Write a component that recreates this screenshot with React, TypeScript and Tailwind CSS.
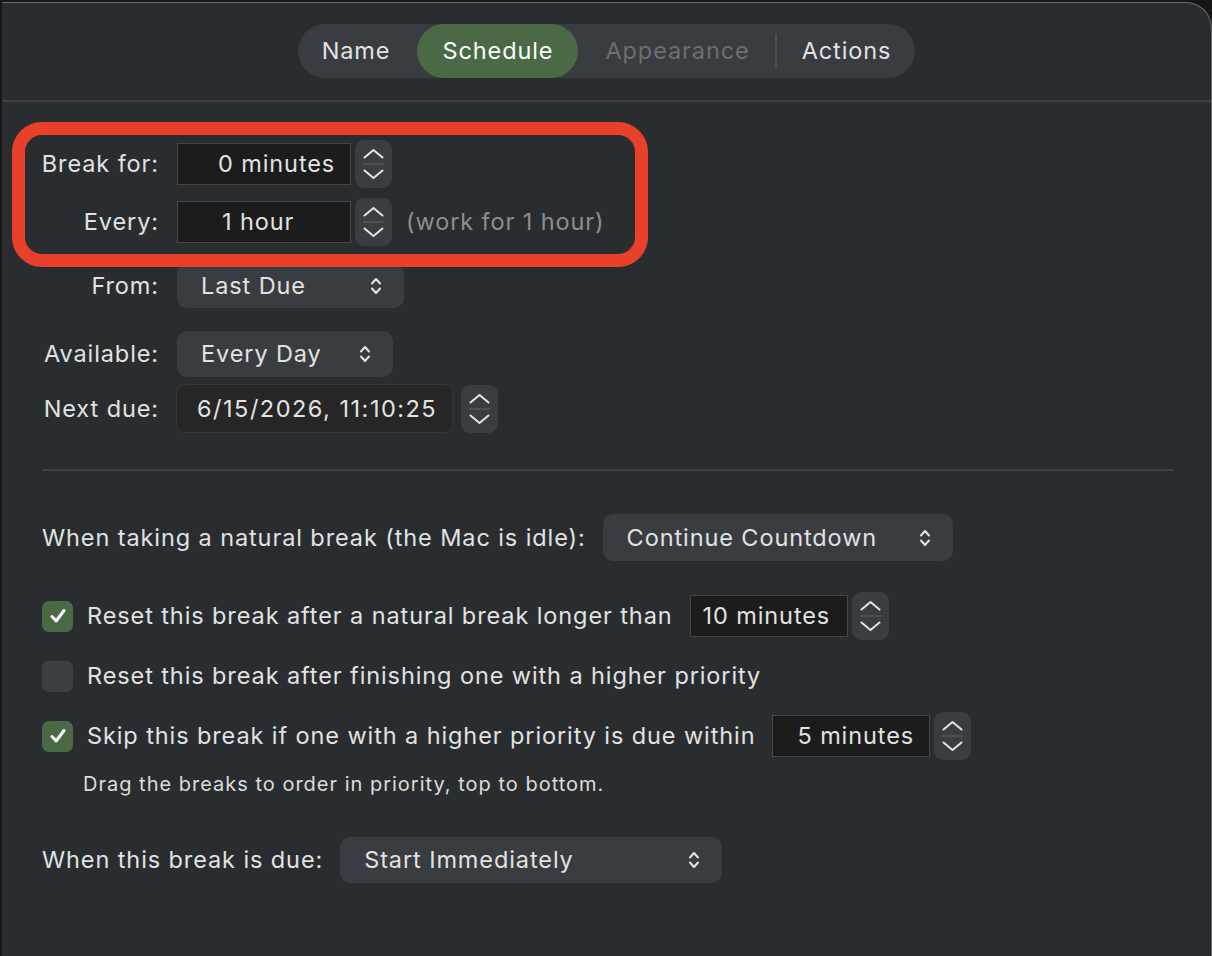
import React from 'react'

const FONT = { fontFamily: 'Inter, "Noto Sans", "Liberation Sans", sans-serif' }

function Stepper() {
  return (
    <div className="w-[37px] h-[48px] rounded-[9px] bg-[#3a3d41] shrink-0">
      <svg width="37" height="48" viewBox="0 0 37 48" fill="none">
        <path d="M9.5 17.5 L18.5 10 L27.5 17.5" stroke="#e4e4e4" strokeWidth="2" strokeLinecap="round" strokeLinejoin="round" />
        <line x1="8" y1="24" x2="29" y2="24" stroke="#55585c" strokeWidth="1.5" />
        <path d="M9.5 30.5 L18.5 38 L27.5 30.5" stroke="#e4e4e4" strokeWidth="2" strokeLinecap="round" strokeLinejoin="round" />
      </svg>
    </div>
  )
}

function UpDown() {
  return (
    <svg width="12" height="20" viewBox="0 0 12 20" fill="none" className="shrink-0">
      <path d="M2 7.5 L6 3 L10 7.5" stroke="#e4e4e4" strokeWidth="2" strokeLinecap="round" strokeLinejoin="round" />
      <path d="M2 12.5 L6 17 L10 12.5" stroke="#e4e4e4" strokeWidth="2" strokeLinecap="round" strokeLinejoin="round" />
    </svg>
  )
}

function Popup({ label, width, height = 'h-[46px]' }: { label: string; width: string; height?: string }) {
  return (
    <div className={`${width} ${height} rounded-[10px] bg-[#393c40] flex items-center justify-between pl-[24px] pr-[22px] shrink-0`}>
      <span>{label}</span>
      <UpDown />
    </div>
  )
}

function NumberField({ value, width, pad }: { value: string; width: string; pad: string }) {
  return (
    <div className={`${width} h-[42px] bg-[#1c1c1c] border border-[#474747] flex items-center ${pad} shrink-0 whitespace-nowrap`}>
      {value}
    </div>
  )
}

function Checkbox({ checked }: { checked: boolean }) {
  if (!checked) {
    return <div className="w-[31px] h-[31px] rounded-[7px] bg-[#3c3f43] shrink-0" />
  }
  return (
    <div className="w-[31px] h-[31px] rounded-[7px] bg-[#4a6a46] flex items-center justify-center shrink-0">
      <svg width="20" height="20" viewBox="0 0 20 20" fill="none">
        <path d="M4 10.5 L8.2 15 L16 4.5" stroke="#ffffff" strokeWidth="3" strokeLinecap="round" strokeLinejoin="round" />
      </svg>
    </div>
  )
}

function Label({ children }: { children: React.ReactNode }) {
  return <div className="w-[135px] text-right shrink-0 whitespace-nowrap">{children}</div>
}

export default function App() {
  return (
    <div className="w-full h-screen bg-[#161616] pl-[2px] pt-[2px]" style={FONT}>
      <div className="relative h-full bg-[#2a2d30] border-t border-r border-[#6c6c6c] rounded-tr-[26px] text-[#e2e2e2] text-[23.5px] tracking-[0.9px] overflow-hidden">
        {/* Tab bar */}
        <div className="h-[97px] flex items-start justify-center pt-[21px]">
          <div className="h-[54px] rounded-full bg-[#393c40] flex items-center pl-[24px] pr-[24px]">
            <span>Name</span>
            <span className="ml-[27px] h-[54px] px-[25px] rounded-full bg-[#496a45] text-white flex items-center">Schedule</span>
            <span className="ml-[27px] text-[#6c6e71]">Appearance</span>
            <span className="ml-[25px] w-[2px] h-[34px] bg-[#4b4e52]" />
            <span className="ml-[25px]">Actions</span>
          </div>
        </div>
        <div className="h-[2px] bg-[#3d4044]" />

        {/* Timing rows */}
        <div className="pl-[22px] pt-[38px] flex flex-col">
          <div className="h-[48px] flex items-center">
            <Label>Break for:</Label>
            <div className="ml-[18px]">
              <NumberField value="0 minutes" width="w-[174px]" pad="pl-[40px]" />
            </div>
            <div className="ml-[4px]">
              <Stepper />
            </div>
          </div>
          <div className="h-[48px] mt-[10px] flex items-center">
            <Label>Every:</Label>
            <div className="ml-[18px]">
              <NumberField value="1 hour" width="w-[174px]" pad="pl-[44px]" />
            </div>
            <div className="ml-[4px]">
              <Stepper />
            </div>
            <span className="ml-[14px] text-[#8d8e90] whitespace-nowrap">(work for 1 hour)</span>
          </div>
          <div className="h-[44px] mt-[18px] flex items-center">
            <Label>From:</Label>
            <div className="ml-[18px]">
              <Popup label="Last Due" width="w-[227px]" height="h-[44px]" />
            </div>
          </div>
          <div className="h-[46px] mt-[23px] flex items-center">
            <Label>Available:</Label>
            <div className="ml-[18px]">
              <Popup label="Every Day" width="w-[216px]" />
            </div>
          </div>
          <div className="h-[49px] mt-[7px] flex items-center">
            <Label>Next due:</Label>
            <div className="ml-[17px] w-[277px] h-[49px] rounded-[9px] bg-[#262626] border border-[#363636] flex items-center pl-[20px] whitespace-nowrap tracking-[1.5px]">
              6/15/2026, 11:10:25
            </div>
            <div className="ml-[8px]">
              <Stepper />
            </div>
          </div>
        </div>

        <div className="mt-[36px] ml-[40px] mr-[37px] h-[2px] bg-[#3d4044]" />

        {/* Natural break options */}
        <div className="pl-[40px] flex flex-col">
          <div className="mt-[43px] h-[47px] flex items-center">
            <span className="whitespace-nowrap">When taking a natural break (the Mac is idle):</span>
            <div className="ml-[17px]">
              <Popup label="Continue Countdown" width="w-[350px]" height="h-[47px]" />
            </div>
          </div>

          <div className="mt-[30px] h-[50px] flex items-center">
            <Checkbox checked />
            <span className="ml-[14px] whitespace-nowrap">Reset this break after a natural break longer than</span>
            <div className="ml-[17px]">
              <NumberField value="10 minutes" width="w-[158px]" pad="pl-[12px]" />
            </div>
            <div className="ml-[4px]">
              <Stepper />
            </div>
          </div>
          <div className="mt-[10px] h-[50px] flex items-center">
            <Checkbox checked={false} />
            <span className="ml-[14px] whitespace-nowrap">Reset this break after finishing one with a higher priority</span>
          </div>
          <div className="mt-[10px] h-[50px] flex items-center">
            <Checkbox checked />
            <span className="ml-[14px] whitespace-nowrap">Skip this break if one with a higher priority is due within</span>
            <div className="ml-[17px]">
              <NumberField value="5 minutes" width="w-[158px]" pad="pl-[24px]" />
            </div>
            <div className="ml-[4px]">
              <Stepper />
            </div>
          </div>
          <div className="mt-[8px] ml-[41px] text-[20px] tracking-[1px] text-[#dcdcdc]">
            Drag the breaks to order in priority, top to bottom.
          </div>

          <div className="mt-[38px] h-[46px] flex items-center">
            <span className="whitespace-nowrap">When this break is due:</span>
            <div className="ml-[17px]">
              <Popup label="Start Immediately" width="w-[382px]" />
            </div>
          </div>
        </div>

        {/* Red highlight around the break timing */}
        <div className="absolute left-[10px] top-[119px] w-[636px] h-[145px] border-[13px] border-[#e8402a] rounded-[30px]" />
      </div>
    </div>
  )
}
